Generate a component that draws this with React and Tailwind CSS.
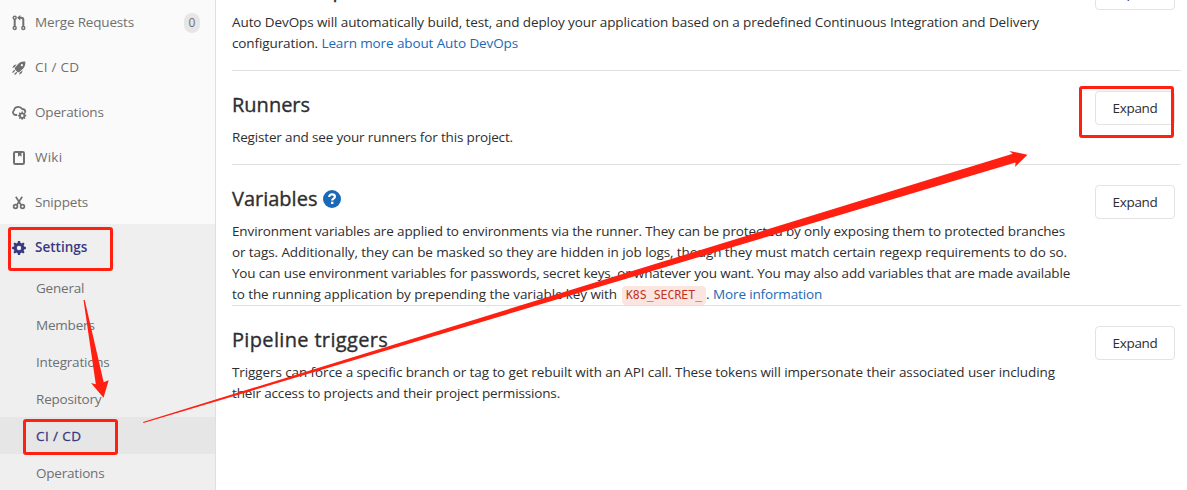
const RED = "#ff2012";

function MergeIcon() {
  return (
    <svg width="14" height="16" viewBox="0 0 14 16" fill="none" stroke="currentColor" strokeWidth="1.4">
      <circle cx="2.7" cy="2.8" r="1.5" />
      <circle cx="2.7" cy="13" r="1.5" />
      <circle cx="11.3" cy="13" r="1.5" />
      <path d="M2.7 4.3v7.2" strokeWidth="2" />
      <path d="M7 2.800h2.300q2 0 2 2v6.700" strokeWidth="2" />
      <path d="M8.300 0v5.600L5 2.800z" fill="currentColor" stroke="none" />
    </svg>
  );
}

function RocketIcon() {
  return (
    <svg width="14" height="14" viewBox="0 0 14 14" fill="currentColor">
      <path
        fillRule="evenodd"
        d="M13.200.6c.5 2.700-.2 5.100-2.200 7.100L7 11.300 5.500 11 3 8.500 2.700 7l3.700-4.200C8.300.9 10.500.200 13.200.600zM9.900 3.100a1.100 1.100 0 1 0 0 2.200 1.100 1.100 0 0 0 0-2.200z"
      />
      <path d="M4.600 3.300 1.900 4.300.200 6.700l2.200-.2zM10.700 9.500l-.9 2.600-2.500 1.700.3-2.200z" />
      <path d="M2.700 9.300.500 11.600M4.900 11.200 2.600 13.500" stroke="currentColor" strokeWidth="1.300" />
    </svg>
  );
}

const GEAR =
  "M6.900.3h2.200l.4 1.900 1.300.55L12.450 1.700 14 3.250l-1.050 1.650.55 1.300 1.900.4v2.200l-1.900.4-.55 1.300L14 12.150l-1.550 1.550-1.650-1.050-1.300.55-.4 1.900H6.900l-.4-1.900-1.300-.55L3.550 13.700 2 12.150l1.050-1.650-.55-1.300-1.900-.4V6.600l1.900-.4.55-1.300L2 3.250 3.550 1.700 5.200 2.750l1.300-.55zM8 5.300a2.400 2.400 0 1 0 0 4.800 2.400 2.400 0 0 0 0-4.800z";

function OperationsIcon() {
  return (
    <svg width="15" height="14" viewBox="0 0 15 14" fill="none">
      <path
        d="M4.500 9H3.600A2.600 2.600 0 0 1 2 4.400C2.400 2.200 4.300.900 6.400.900c1.700 0 3 .8 3.800 2.100 1.900 0 3.100 1.200 3.100 2.900"
        stroke="currentColor"
        strokeWidth="1.800"
        strokeLinecap="round"
      />
      <path d={GEAR} transform="translate(5.700 5.400) scale(.56)" fill="currentColor" fillRule="evenodd" />
    </svg>
  );
}

function BookIcon() {
  return (
    <svg width="14" height="14" viewBox="0 0 14 14" fill="none">
      <rect x="2" y="1" width="10" height="12" rx="1.300" stroke="currentColor" strokeWidth="2" />
      <path d="M6 1h3.500v4.700l-1.750-1.300L6 5.700z" fill="currentColor" />
    </svg>
  );
}

function ScissorsIcon() {
  return (
    <svg width="14" height="14" viewBox="0 0 14 14" fill="none" stroke="currentColor" strokeWidth="1.700">
      <circle cx="3.500" cy="10.500" r="1.900" />
      <circle cx="10.500" cy="10.500" r="1.900" />
      <path d="M3.800.800l5.200 8M10.200.800 5 8.800" strokeWidth="1.700" />
    </svg>
  );
}

function GearIcon() {
  return (
    <svg width="14" height="14" viewBox="0.5 0.2 15 15" fill="currentColor">
      <path d={GEAR} fillRule="evenodd" />
    </svg>
  );
}

function NavItem({ icon, label, badge, wide }) {
  return (
    <li className="flex h-[45px] items-center pt-0.5 pr-[15px] pl-3 text-[#707070]">
      <span className="flex w-[23px] items-center">{icon}</span>
      <span className={wide ? "grow tracking-[0.25px]" : "grow tracking-[-0.17px]"}>{label}</span>
      {badge && (
        <span className="flex h-5 w-4 items-center justify-center rounded-full bg-[#e6e6e6] text-[12px] leading-none">
          {badge}
        </span>
      )}
    </li>
  );
}

function SubItem({ label, active }) {
  return (
    <li
      className={
        active
          ? "flex h-[37px] items-center bg-[#e6e6e6] pt-0.5 pl-9 tracking-[0.4px] text-[#393982] [-webkit-text-stroke:0.3px]"
          : "flex h-[37px] items-center pt-0.5 pl-9 tracking-[-0.2px] text-[#707070]"
      }
    >
      {label}
    </li>
  );
}

function Sidebar() {
  return (
    <nav className="h-[490px] w-[216px] shrink-0 overflow-hidden border-r border-[#dfdfdf] bg-[#fafafa]">
      <ul className="-mt-px">
        <NavItem icon={<MergeIcon />} label="Merge Requests" badge="0" />
        <NavItem icon={<RocketIcon />} label="CI / CD" wide />
        <NavItem icon={<OperationsIcon />} label="Operations" />
        <NavItem icon={<BookIcon />} label="Wiki" wide />
        <NavItem icon={<ScissorsIcon />} label="Snippets" />
      </ul>
      <div className="h-[300px] bg-[#efefef]">
        <div className="flex h-[45px] items-center pt-0.5 pl-3 font-semibold text-[#393982]">
          <span className="w-[23px]">
            <GearIcon />
          </span>
          Settings
        </div>
        <ul>
          <SubItem label="General" />
          <SubItem label="Members" />
          <SubItem label="Integrations" />
          <SubItem label="Repository" />
          <SubItem label="CI / CD" active />
          <SubItem label="Operations" />
        </ul>
      </div>
    </nav>
  );
}

function Section({ title, className, children }) {
  return (
    <section className={`flex justify-between pr-[6px] ${className}`}>
      <div>
        <h4 className="flex h-[27px] items-center text-[20px] leading-6 whitespace-nowrap [-webkit-text-stroke:0.35px]">
          {title}
        </h4>
        <div className="pt-[9px] leading-[21px] whitespace-nowrap">{children}</div>
      </div>
      <button className="h-[34px] w-20 shrink-0 rounded-[4px] border border-[#e3e3e3] bg-white tracking-[-0.35px]">
        Expand
      </button>
    </section>
  );
}

function HelpIcon() {
  return (
    <svg className="ml-1.5" width="18" height="18" viewBox="0 0 18 18">
      <circle cx="9" cy="9" r="9" fill="#1b69b6" />
      <path d="M6.200 6.900C6.200 5.200 7.400 4.400 9 4.400s2.900.9 2.900 2.300c0 1.900-2.700 1.900-2.700 3.700" fill="none" stroke="#fff" strokeWidth="2.200" />
      <rect x="8" y="11.700" width="2.400" height="2.300" fill="#fff" />
    </svg>
  );
}

function Annotations() {
  return (
    <svg className="pointer-events-none absolute inset-0" width="1187" height="490" viewBox="0 0 1187 490">
      <g fill="none" stroke={RED} strokeWidth="3">
        <rect x="9.500" y="228.500" width="102" height="41" rx="1.500" />
        <rect x="24.500" y="420.500" width="92" height="33" rx="1.500" />
        <rect x="1080.500" y="87.500" width="92" height="49" rx="1.500" />
      </g>
      <g fill={RED}>
        <path d="M83.500 300h1.200L103.700 382.300l5-2.100-5.200 17.500L91 383l4.800 1.200z" />
        <path d="M143 421.900 1012.700 153.700 1009.500 151l18 3.700-12.300 12.200.3-4.400L143.500 423z" />
      </g>
    </svg>
  );
}

export default function App() {
  return (
    <div className="relative flex h-[490px] w-[1187px] overflow-hidden bg-white font-['Open_Sans',sans-serif] text-[13.5px] text-[#2e2e2e]">
      <Sidebar />
      <main className="-mt-6 w-[965px] pl-4">
        <Section title="Auto DevOps" className="h-[94px]">
          <p className="tracking-[-0.09px]">
            Auto DevOps will automatically build, test, and deploy your application based on a predefined Continuous
            Integration and Delivery
          </p>
          <p className="tracking-[-0.112px]">
            configuration. <a className="text-[#1b69b6]">Learn more about Auto DevOps</a>
          </p>
        </Section>
        <Section title="Runners" className="h-[94px] border-t border-[#e1e1e1] pt-5">
          <p className="tracking-[-0.162px]">Register and see your runners for this project.</p>
        </Section>
        <Section
          title={
            <>
              Variables
              <HelpIcon />
            </>
          }
          className="h-[141px] border-t border-[#e1e1e1] pt-5"
        >
          <p className="tracking-[-0.133px]">
            Environment variables are applied to environments via the runner. They can be protected by only exposing
            them to protected branches
          </p>
          <p className="tracking-[-0.094px]">
            or tags. Additionally, they can be masked so they are hidden in job logs, though they must match certain
            regexp requirements to do so.
          </p>
          <p className="tracking-[-0.179px]">
            You can use environment variables for passwords, secret keys, or whatever you want. You may also add
            variables that are made available
          </p>
          <p className="flex h-[21px] items-center">
            <span className="tracking-[-0.092px]">to the running application by prepending the variable key with</span>
            <code className="mt-px ml-[5px] h-[19px] w-[84px] rounded-[4px] bg-[#fbe5e1] text-center font-['DejaVu_Sans_Mono',monospace] text-[11.5px] leading-[19px] text-[#c0341d]">
              K8S_SECRET_
            </code>
            <span>.</span>
            <a className="ml-[3.500px] tracking-[-0.15px] text-[#1b69b6]">More information</a>
          </p>
        </Section>
        <Section
          title={<span className="tracking-[0.34px]">Pipeline triggers</span>}
          className="border-t border-[#e1e1e1] pt-5"
        >
          <p className="tracking-[-0.099px]">
            Triggers can force a specific branch or tag to get rebuilt with an API call. These tokens will impersonate
            their associated user including
          </p>
          <p className="tracking-[-0.15px]">their access to projects and their project permissions.</p>
        </Section>
      </main>
      <Annotations />
    </div>
  );
}
